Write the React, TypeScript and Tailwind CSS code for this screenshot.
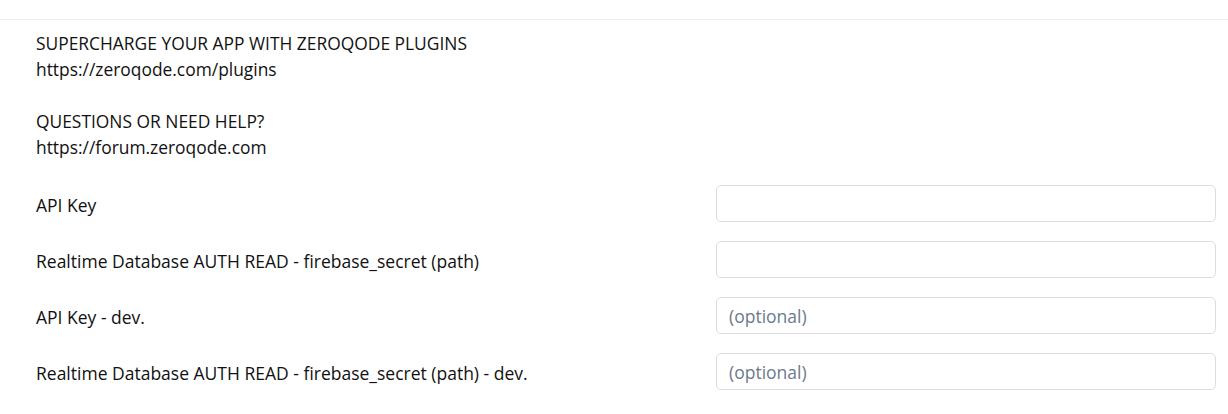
import React from "react";

const rows = [
  { label: "API Key", placeholder: "" },
  { label: "Realtime Database AUTH READ - firebase_secret (path)", placeholder: "" },
  { label: "API Key - dev.", placeholder: "(optional)" },
  { label: "Realtime Database AUTH READ - firebase_secret (path) - dev.", placeholder: "(optional)" },
];

export default function App() {
  return (
    <div className="w-[1228px] h-[414px] bg-white overflow-hidden text-[#111111] font-['Open_Sans',sans-serif] text-[17.5px]">
      <div className="h-[20px] border-b border-[#eeeeee]" />
      <div className="pl-[36px] pt-[10px] leading-[26px] text-[17.4px]">
        <div>SUPERCHARGE YOUR APP WITH ZEROQODE PLUGINS</div>
        <div>https://zeroqode.com/plugins</div>
        <div>&nbsp;</div>
        <div>QUESTIONS OR NEED HELP?</div>
        <div>https://forum.zeroqode.com</div>
      </div>
      <div className="mt-[25px] flex flex-col gap-[19px] pl-[36px] pr-[12px]">
        {rows.map((r) => (
          <div key={r.label} className="flex items-center justify-between h-[37px]">
            <div className="leading-[26px] pt-[2px]">{r.label}</div>
            <input
              className="w-[500px] h-[37px] border border-[#dddddd] rounded-[5px] px-[12px] text-[17.5px] text-[#111111] placeholder:text-[#6b7a8c] outline-none font-['Open_Sans',sans-serif]"
              placeholder={r.placeholder}
              readOnly
            />
          </div>
        ))}
      </div>
    </div>
  );
}
